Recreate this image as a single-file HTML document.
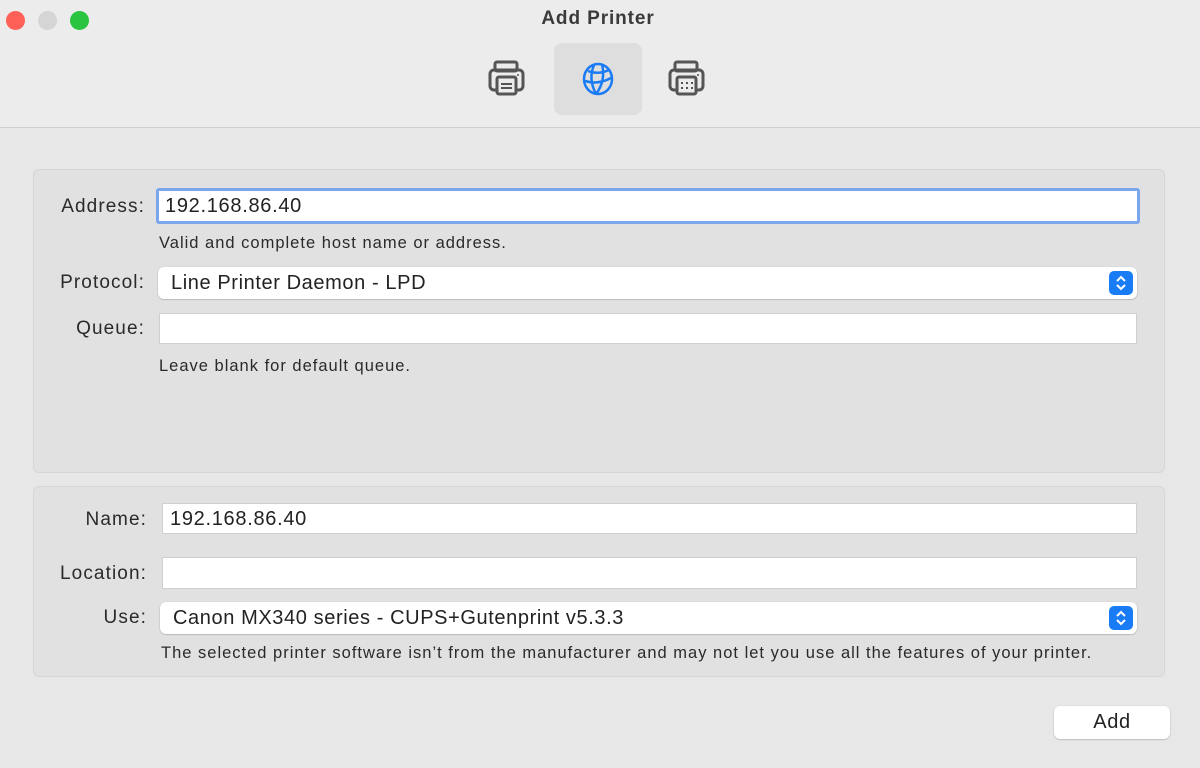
<!DOCTYPE html><html><head><style>
body{margin:0;width:1200px;height:768px;background:#e7e7e7;font-family:"Liberation Sans",sans-serif;position:relative;overflow:hidden;color:#222}
.a{position:absolute}
.tb{left:0;top:0;width:1200px;height:127px;background:#ececec;border-bottom:1px solid #cfcfcf}
.dot{width:19px;height:19px;border-radius:50%;top:11px}
.panel{background:#e1e1e1;border:1px solid #d6d6d6;border-radius:6px}
.fld{background:#fff;border:1px solid #cfcfcf;box-sizing:border-box;font-size:20px;letter-spacing:0.7px;padding-left:7px;line-height:30px}
.lbl{font-size:19px;letter-spacing:1.1px;text-align:right;color:#2a2a2a}
.hint{font-size:16.5px;letter-spacing:1px;color:#2a2a2a;white-space:nowrap}
.pop{background:#fff;border-radius:6px;box-shadow:0 0.5px 1.5px rgba(0,0,0,.3);font-size:20px;letter-spacing:0.6px;line-height:32px;padding-left:13px;box-sizing:border-box}
.st{position:absolute;right:4px;top:4px;width:24px;height:24px;border-radius:5px;background:#1a7cf5}
</style></head><body>
<div class="a tb"></div>
<div class="a dot" style="left:6px;background:#fe5f57"></div>
<div class="a dot" style="left:38px;background:#d5d5d5"></div>
<div class="a dot" style="left:70px;background:#2ac440"></div>
<div class="a" style="left:0;width:1196px;top:8px;text-align:center;font-weight:bold;font-size:19px;letter-spacing:0.9px;color:#3a3a3a">Add Printer</div>
<div class="a" style="left:554px;top:43px;width:88px;height:72px;background:#dedede;border-radius:8px"></div>
<svg class="a" style="left:486px;top:58px" width="44" height="40" viewBox="0 0 44 40" fill="none" stroke="#555" stroke-width="3"><rect x="9" y="4" width="22" height="9" rx="2"/><rect x="4" y="12" width="33" height="20" rx="4"/><rect x="11" y="19" width="19" height="17" rx="2" fill="#ececec"/><line x1="15" y1="26" x2="26" y2="26" stroke-width="2"/><line x1="15" y1="30" x2="26" y2="30" stroke-width="2"/><circle cx="32" cy="17" r="1" fill="#555" stroke="none"/></svg>
<svg class="a" style="left:580px;top:61px" width="36" height="36" viewBox="0 0 36 36" fill="none" stroke="#1a7cf5" stroke-width="2.5"><ellipse cx="18" cy="18" rx="14" ry="15"/><path d="M8 10 Q18 14 29 9 M5 20 Q18 24 31 17 M14 4 Q8 18 16 33 M22 3 Q26 20 16 33"/></svg>
<svg class="a" style="left:666px;top:58px" width="44" height="40" viewBox="0 0 44 40" fill="none" stroke="#555" stroke-width="3"><rect x="9" y="4" width="22" height="9" rx="2"/><rect x="4" y="12" width="33" height="20" rx="4"/><rect x="11" y="19" width="19" height="17" rx="2" fill="#ececec"/><g stroke-width="2"><line x1="16" y1="24" x2="16" y2="26"/><line x1="21" y1="24" x2="21" y2="26"/><line x1="26" y1="24" x2="26" y2="26"/><line x1="16" y1="29" x2="16" y2="31"/><line x1="21" y1="29" x2="21" y2="31"/><line x1="26" y1="29" x2="26" y2="31"/></g><circle cx="32" cy="17" r="1" fill="#555" stroke="none"/></svg>
<div class="a panel" style="left:33px;top:169px;width:1130px;height:302px"></div>
<div class="a panel" style="left:33px;top:486px;width:1130px;height:189px"></div>
<div class="a lbl" style="left:30px;width:115px;top:196px">Address:</div>
<div class="a fld" style="left:156px;top:188px;width:984px;height:36px;border:3px solid #7aa6ec;border-radius:3px;padding-left:6px">192.168.86.40</div>
<div class="a hint" style="left:159px;top:234px">Valid and complete host name or address.</div>
<div class="a lbl" style="left:30px;width:115px;top:272px">Protocol:</div>
<div class="a pop" style="left:158px;top:267px;width:979px;height:32px">Line Printer Daemon - LPD<div class="st"><svg width="24" height="24"><path d="M8 10l4-4 4 4M8 14l4 4 4-4" fill="none" stroke="#fff" stroke-width="2"/></svg></div></div>
<div class="a lbl" style="left:30px;width:115px;top:318px">Queue:</div>
<div class="a fld" style="left:159px;top:313px;width:978px;height:31px"></div>
<div class="a hint" style="left:159px;top:357px">Leave blank for default queue.</div>
<div class="a lbl" style="left:30px;width:117px;top:509px">Name:</div>
<div class="a fld" style="left:162px;top:503px;width:975px;height:31px">192.168.86.40</div>
<div class="a lbl" style="left:30px;width:117px;top:563px">Location:</div>
<div class="a fld" style="left:162px;top:557px;width:975px;height:32px"></div>
<div class="a lbl" style="left:30px;width:117px;top:607px">Use:</div>
<div class="a pop" style="left:160px;top:602px;width:977px;height:32px">Canon MX340 series - CUPS+Gutenprint v5.3.3<div class="st"><svg width="24" height="24"><path d="M8 10l4-4 4 4M8 14l4 4 4-4" fill="none" stroke="#fff" stroke-width="2"/></svg></div></div>
<div class="a hint" style="left:161px;top:644px">The selected printer software isn’t from the manufacturer and may not let you use all the features of your printer.</div>
<div class="a pop" style="left:1054px;top:706px;width:116px;height:33px;padding:0;text-align:center;line-height:33px">Add</div>
</body></html>
